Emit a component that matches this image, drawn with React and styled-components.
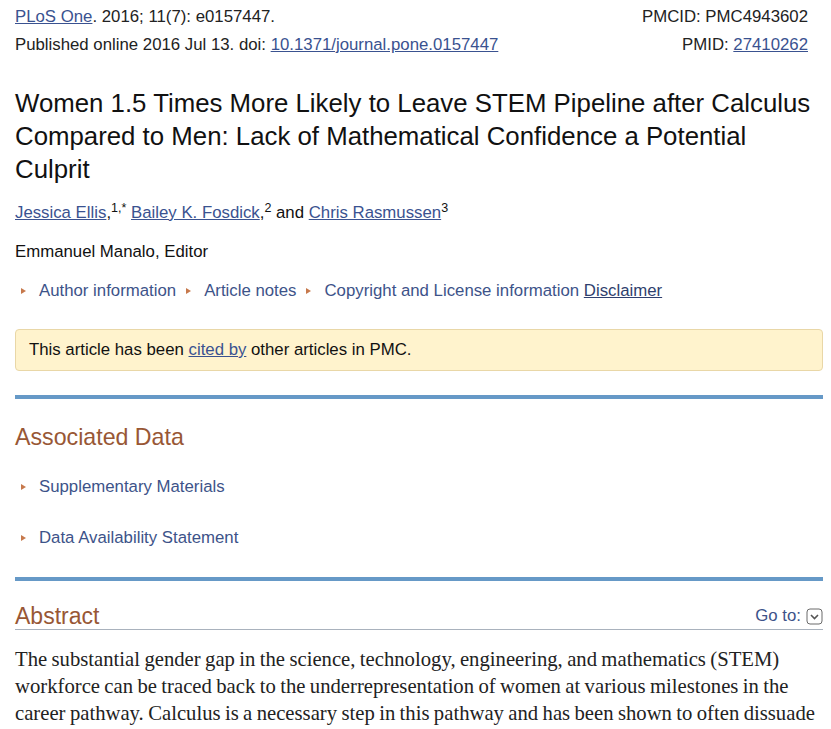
import React from "react";
import styled, { createGlobalStyle } from "styled-components";

const Global = createGlobalStyle`
  html, body { margin: 0; padding: 0; background: #fff; }
  body { font-family: "Liberation Sans", Arial, sans-serif; color: #222; }
`;

const Page = styled.div`
  padding: 3px 8px 0 15px;
  width: 808px;
`;

const Header = styled.div`
  display: flex;
  justify-content: space-between;
  padding-right: 15px;
  font-size: 16.8px;
  line-height: 28px;
  color: #222;
`;

const Col = styled.div`
  display: flex;
  flex-direction: column;
  align-items: ${(p) => (p.$right ? "flex-end" : "flex-start")};
`;

const Link = styled.a`
  color: ${(p) => (p.$dark ? "#2f3f6e" : "#3a5290")};
  text-decoration: underline;
  cursor: pointer;
`;

const Title = styled.h1`
  margin: 28px 0 0;
  font-size: 25.8px;
  line-height: 33px;
  font-weight: normal;
  color: #111;
`;

const Line = styled.div`
  margin-top: ${(p) => p.$mt || 15}px;
  font-size: 16.8px;
  line-height: 24px;
  color: #111;
`;

const Sup = styled.sup`
  font-size: 12.5px;
  line-height: 0;
  vertical-align: 6px;
`;

const Row = styled.div`
  display: flex;
  align-items: center;
  margin-top: ${(p) => p.$mt || 15}px;
  font-size: 16.8px;
  line-height: 24px;
`;

const Arrow = styled.span`
  display: inline-block;
  width: 0;
  height: 0;
  border-left: 5px solid #c7794c;
  border-top: 3.5px solid transparent;
  border-bottom: 3.5px solid transparent;
  margin: 0 ${(p) => p.$gap || 13}px 0 ${(p) => p.$lead || 6}px;
`;

const Toggle = styled.span`
  color: #3d5389;
`;

const Notice = styled.div`
  margin-top: 26px;
  height: 40px;
  display: flex;
  align-items: center;
  padding: 0 13px;
  background: #fff3cd;
  border: 1px solid #e9d7a7;
  border-radius: 4px;
  font-size: 16.8px;
  color: #111;
`;

const Rule = styled.div`
  margin-top: ${(p) => p.$mt}px;
  height: 4px;
  background: #6699c7;
`;

const SectionHead = styled.h2`
  margin: ${(p) => p.$mt}px 0 0;
  font-size: 23.2px;
  line-height: 30px;
  font-weight: normal;
  color: #985735;
`;

const AbstractHead = styled.div`
  margin-top: 22px;
  display: flex;
  justify-content: space-between;
  align-items: center;
  border-bottom: 1px solid #a9b2bd;
  height: 26px;
`;

const HeadText = styled.h2`
  margin: 0;
  font-size: 23px;
  line-height: 26px;
  font-weight: normal;
  color: #985735;
`;

const GoTo = styled.div`
  display: flex;
  align-items: center;
  gap: 5px;
  font-size: 16.8px;
  color: #3d5389;
`;

const Body = styled.p`
  margin: 16px 0 0;
  font-family: "Liberation Serif", "Times New Roman", serif;
  font-size: 20.7px;
  line-height: 27px;
  word-spacing: -0.8px;
  color: #222;
`;

function GoToIcon() {
  return (
    <svg width="17" height="17" viewBox="0 0 17 17">
      <rect x="1" y="1" width="15" height="15" rx="3" fill="#fff" stroke="#6b6b6b" strokeWidth="1" />
      <path d="M5 7 L8.5 10.5 L12 7" fill="none" stroke="#555" strokeWidth="1.6" />
    </svg>
  );
}

export default function App() {
  return (
    <>
      <Global />
      <Page>
        <Header>
          <Col>
            <span>
              <Link>PLoS One</Link>. 2016; 11(7): e0157447.
            </span>
            <span>
              Published online 2016 Jul 13. doi: <Link>10.1371/journal.pone.0157447</Link>
            </span>
          </Col>
          <Col $right>
            <span>PMCID: PMC4943602</span>
            <span>
              PMID: <Link>27410262</Link>
            </span>
          </Col>
        </Header>

        <Title>
          Women 1.5 Times More Likely to Leave STEM Pipeline after Calculus Compared to Men: Lack of
          Mathematical Confidence a Potential Culprit
        </Title>

        <Line $mt={15}>
          <Link>Jessica Ellis</Link>,<Sup>1,*</Sup> <Link>Bailey K. Fosdick</Link>,<Sup>2</Sup> and{" "}
          <Link>Chris Rasmussen</Link>
          <Sup>3</Sup>
        </Line>

        <Line $mt={15}>Emmanuel Manalo, Editor</Line>

        <Row $mt={15}>
          <Arrow $lead={6} />
          <Toggle>Author information</Toggle>
          <Arrow $lead={10} />
          <Toggle>Article notes</Toggle>
          <Arrow $lead={10} />
          <Toggle>Copyright and License information</Toggle>
          &nbsp;<Link $dark>Disclaimer</Link>
        </Row>

        <Notice>
          <span>
            This article has been <Link>cited by</Link> other articles in PMC.
          </span>
        </Notice>

        <Rule $mt={24} />

        <SectionHead $mt={23}>Associated Data</SectionHead>

        <Row $mt={23}>
          <Arrow $lead={6} />
          <Toggle>Supplementary Materials</Toggle>
        </Row>
        <Row $mt={27}>
          <Arrow $lead={6} />
          <Toggle>Data Availability Statement</Toggle>
        </Row>

        <Rule $mt={27} />

        <AbstractHead>
          <HeadText>Abstract</HeadText>
          <GoTo>
            Go to: <GoToIcon />
          </GoTo>
        </AbstractHead>

        <Body>
          The substantial gender gap in the science, technology, engineering, and mathematics (STEM)
          workforce can be traced back to the underrepresentation of women at various milestones in the
          career pathway. Calculus is a necessary step in this pathway and has been shown to often dissuade
          students from pursuing STEM fields.
        </Body>
      </Page>
    </>
  );
}
